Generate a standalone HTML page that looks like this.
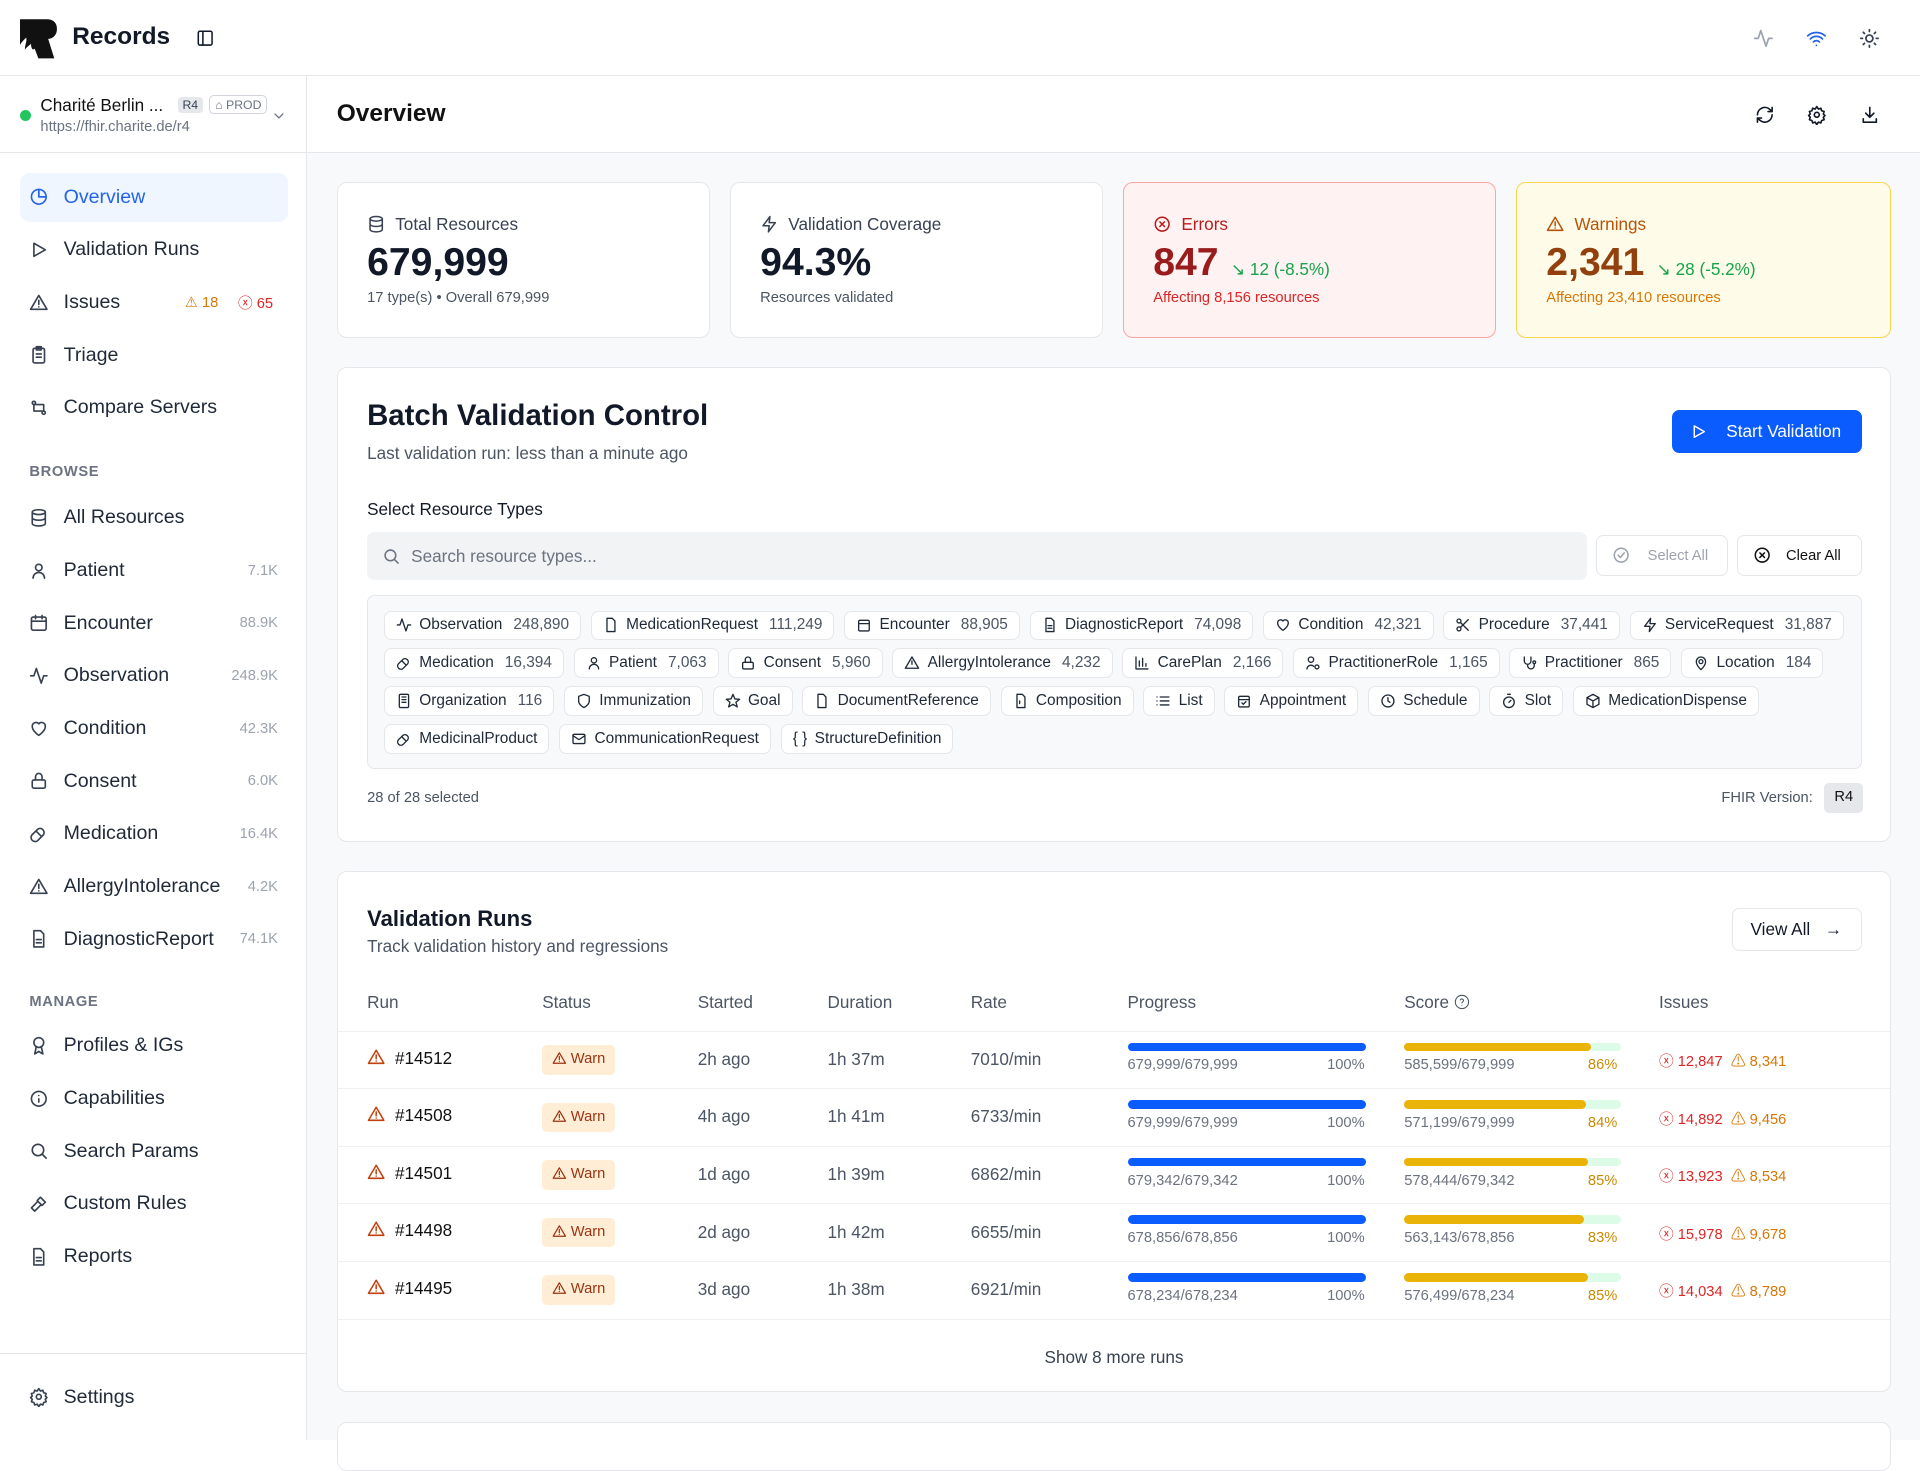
<!DOCTYPE html>
<html><head><meta charset="utf-8"><style>
html{zoom:1.2244898}
*{box-sizing:border-box;margin:0;padding:0}
body{width:1568px;height:1176px;overflow:hidden;font-family:"Liberation Sans",sans-serif;color:#111827;background:#fff;position:relative}
svg{fill:none;stroke:currentColor;stroke-width:2;stroke-linecap:round;stroke-linejoin:round}
.abs{position:absolute}
.top{position:absolute;left:0;top:0;width:1568px;height:62px;border-bottom:1px solid #e5e7eb;background:#fff}
.side{position:absolute;left:0;top:62px;width:251px;height:1114px;border-right:1px solid #e5e7eb;background:#fff}
.main{position:absolute;left:251px;top:62px;width:1317px;height:1114px;background:#f8f9fb}
.nav{position:absolute;left:16px;width:219px;height:40px;display:flex;align-items:center;font-size:16px;color:#1f2937}
.nav svg{width:16px;height:16px;margin:0 12px 0 8px;color:#374151}
.nav .c{margin-left:auto;margin-right:8px;font-size:12px;color:#9ca3af}
.sec{position:absolute;left:24px;font-size:12px;font-weight:bold;color:#6b7280;letter-spacing:.5px}
.card{position:absolute;background:#fff;border:1px solid #e5e7eb;border-radius:8px}
.stat .t{position:absolute;left:24px;top:25px;font-size:14px;color:#374151;display:flex;align-items:center}
.stat .t svg{width:15px;height:15px;margin-right:8px}
.stat .v{position:absolute;left:24px;top:47px;font-size:32px;font-weight:bold;display:flex;align-items:baseline}
.stat .s{position:absolute;left:24px;top:87px;font-size:12px;color:#4b5563}
.chips{line-height:0}
.chip{display:inline-flex;align-items:center;height:24px;line-height:normal;vertical-align:top;border:1px solid #e5e7eb;border-radius:6px;background:#fff;padding:0 9px;font-size:12.6px;color:#1f2937;margin:0 8px 7px 0;white-space:nowrap}
.chip svg{width:13px;height:13px;margin-right:6px}
.chip b{font-weight:normal;color:#4b5563;margin-left:9px}
.th{position:absolute;top:98px;font-size:14px;color:#4b5563;display:flex;align-items:center}
.row{position:absolute;left:0;width:1268px;height:47px;border-top:1px solid #eef0f3}
.row>*{position:absolute}
.bar{height:7px;border-radius:4px}
</style></head><body>
<div class="top">
 <svg class="abs" style="left:16px;top:15px;width:32px;height:33px;stroke:none;fill:#111" viewBox="0 0 32 33"><path d="M0 1h22c6 0 9 4 8 10-1 4-4 6-7 6l5 16H15l-3-8c-2 2-3-1-3-4-2 2-4 3-5 5 0-5 2-7 1-10-2 2-4 4-5 6z"/></svg>
 <div class="abs" style="left:59px;top:19px;font-size:20px;font-weight:bold">Records</div>
 <svg class="abs" style="left:160px;top:24px;width:15px;height:15px" viewBox="0 0 24 24"><rect x="3" y="3" width="18" height="18" rx="2"/><path d="M9 3v18"/></svg>
 <svg class="abs" style="left:1432px;top:23px;width:17px;height:17px;color:#9ca3af" viewBox="0 0 24 24"><path d="M22 12h-4l-3 9L9 3l-3 9H2"/></svg>
 <svg class="abs" style="left:1475px;top:23px;width:17px;height:17px;color:#2563eb" viewBox="0 0 24 24"><path d="M5 12.5a10 10 0 0 1 14 0M8.5 16a5 5 0 0 1 7 0M2 9a15 15 0 0 1 20 0M12 20h.01"/></svg>
 <svg class="abs" style="left:1518px;top:23px;width:17px;height:17px;color:#374151" viewBox="0 0 24 24"><circle cx="12" cy="12" r="4"/><path d="M12 2v2M12 20v2M4.9 4.9l1.4 1.4M17.7 17.7l1.4 1.4M2 12h2M20 12h2M6.3 17.7l-1.4 1.4M19.1 4.9l-1.4 1.4"/></svg>
</div>
<div class="side">
 <div class="abs" style="left:16px;top:28px;width:9px;height:9px;border-radius:50%;background:#22c55e"></div>
 <div class="abs" style="left:33px;top:16px;font-size:14px;color:#111">Charité Berlin ...</div>
 <div class="abs" style="left:145px;top:17px;font-size:10px;background:#e5e7eb;border-radius:3px;padding:1px 4px;color:#374151">R4</div>
 <div class="abs" style="left:171px;top:16px;font-size:10px;border:1px solid #d1d5db;border-radius:4px;padding:1px 4px;color:#6b7280">⌂ PROD</div>
 <svg class="abs" style="left:221px;top:26px;width:13px;height:13px;color:#6b7280" viewBox="0 0 24 24"><path d="M6 9l6 6 6-6"/></svg>
 <div class="abs" style="left:33px;top:35px;font-size:12px;color:#6b7280">https://fhir.charite.de/r4</div>
 <div class="abs" style="left:0;top:62px;width:250px;border-top:1px solid #e5e7eb"></div>
</div>
<div class="nav" style="top:141px;background:#eff6ff;border-radius:8px;color:#2563eb"><svg viewBox="0 0 24 24" style="color:#2563eb"><path d="M21 12a9 9 0 1 1-9-9v9z"/><path d="M12 3a9 9 0 0 1 9 9h-9z"/></svg>Overview</div>
<div class="nav" style="top:184px"><svg viewBox="0 0 24 24"><path d="M6 4l14 8-14 8z"/></svg>Validation Runs</div>
<div class="nav" style="top:227px"><svg viewBox="0 0 24 24"><path d="M12 3L2 20h20z M12 9v5 M12 17h.01"/></svg>Issues<span style="margin-left:auto;font-size:12px;color:#d97706">⚠ 18</span><span style="margin:0 12px 0 16px;font-size:12px;color:#dc2626">ⓧ 65</span></div>
<div class="nav" style="top:270px"><svg viewBox="0 0 24 24"><rect x="5" y="4" width="14" height="18" rx="2"/><path d="M9 2h6v4H9zM9 11h6M9 15h6"/></svg>Triage</div>
<div class="nav" style="top:313px"><svg viewBox="0 0 24 24"><circle cx="6" cy="6" r="2"/><circle cx="18" cy="18" r="2"/><path d="M6 8v8h10M18 16V8H8"/></svg>Compare Servers</div>
<div class="sec" style="top:379px">BROWSE</div>
<div class="nav" style="top:403px"><svg viewBox="0 0 24 24"><ellipse cx="12" cy="5" rx="8" ry="3"/><path d="M4 5v14c0 1.7 3.6 3 8 3s8-1.3 8-3V5M4 12c0 1.7 3.6 3 8 3s8-1.3 8-3"/></svg>All Resources</div>
<div class="nav" style="top:446px"><svg viewBox="0 0 24 24"><circle cx="12" cy="8" r="4"/><path d="M5 21a7 7 0 0 1 14 0"/></svg>Patient<span class="c">7.1K</span></div>
<div class="nav" style="top:489px"><svg viewBox="0 0 24 24"><rect x="3" y="5" width="18" height="16" rx="2"/><path d="M8 3v4M16 3v4M3 10h18"/></svg>Encounter<span class="c">88.9K</span></div>
<div class="nav" style="top:532px"><svg viewBox="0 0 24 24"><path d="M22 12h-4l-3 9L9 3l-3 9H2"/></svg>Observation<span class="c">248.9K</span></div>
<div class="nav" style="top:575px"><svg viewBox="0 0 24 24"><path d="M12 20s-8-5-8-11a4.5 4.5 0 0 1 8-3 4.5 4.5 0 0 1 8 3c0 6-8 11-8 11z"/></svg>Condition<span class="c">42.3K</span></div>
<div class="nav" style="top:618px"><svg viewBox="0 0 24 24"><rect x="4" y="11" width="16" height="10" rx="2"/><path d="M8 11V7a4 4 0 0 1 8 0v4"/></svg>Consent<span class="c">6.0K</span></div>
<div class="nav" style="top:661px"><svg viewBox="0 0 24 24"><path d="M10.5 20.5a5 5 0 0 1-7-7l7-7a5 5 0 0 1 7 7zM8.5 8.5l7 7"/></svg>Medication<span class="c">16.4K</span></div>
<div class="nav" style="top:704px"><svg viewBox="0 0 24 24"><path d="M12 3L2 20h20z M12 9v5 M12 17h.01"/></svg>AllergyIntolerance<span class="c">4.2K</span></div>
<div class="nav" style="top:747px"><svg viewBox="0 0 24 24"><path d="M14 2H6v20h12V6z M9 13h6M9 17h6"/></svg>DiagnosticReport<span class="c">74.1K</span></div>
<div class="sec" style="top:812px">MANAGE</div>
<div class="nav" style="top:834px"><svg viewBox="0 0 24 24"><circle cx="12" cy="8" r="6"/><path d="M9 13l-2 9 5-3 5 3-2-9"/></svg>Profiles &amp; IGs</div>
<div class="nav" style="top:877px"><svg viewBox="0 0 24 24"><circle cx="12" cy="12" r="9"/><path d="M12 16v-4M12 8h.01"/></svg>Capabilities</div>
<div class="nav" style="top:920px"><svg viewBox="0 0 24 24"><circle cx="11" cy="11" r="7"/><path d="M21 21l-5-5"/></svg>Search Params</div>
<div class="nav" style="top:963px"><svg viewBox="0 0 24 24"><path d="M14 4l6 6-4 4-6-6zM11 9l-8 8 4 4 8-8"/></svg>Custom Rules</div>
<div class="nav" style="top:1006px"><svg viewBox="0 0 24 24"><path d="M14 2H6v20h12V6z M9 13h6M9 17h6"/></svg>Reports</div>
<div class="abs" style="left:0;top:1105px;width:250px;border-top:1px solid #e5e7eb"></div>
<div class="nav" style="top:1121px"><svg viewBox="0 0 24 24"><circle cx="12" cy="12" r="3"/><path d="M12 2l2 3 3-1 1 3 3 1-1 3 2 2-2 2 1 3-3 1-1 3-3-1-2 3-2-3-3 1-1-3-3-1 1-3-2-2 2-2-1-3 3-1 1-3 3 1z"/></svg>Settings</div>

<div class="main">
 <div class="abs" style="left:0;top:0;width:1317px;height:63px;background:#fff;border-bottom:1px solid #e5e7eb"></div>
 <div class="abs" style="left:24px;top:20px;font-size:20px;font-weight:bold;color:#111">Overview</div>
 <svg class="abs" style="left:1182px;top:24px;width:16px;height:16px" viewBox="0 0 24 24"><path d="M3 12a9 9 0 0 1 15-6.7L21 8M21 3v5h-5M21 12a9 9 0 0 1-15 6.7L3 16M3 21v-5h5"/></svg>
 <svg class="abs" style="left:1225px;top:24px;width:16px;height:16px" viewBox="0 0 24 24"><circle cx="12" cy="12" r="3"/><path d="M12 2l2 3 3-1 1 3 3 1-1 3 2 2-2 2 1 3-3 1-1 3-3-1-2 3-2-3-3 1-1-3-3-1 1-3-2-2 2-2-1-3 3-1 1-3 3 1z"/></svg>
 <svg class="abs" style="left:1268px;top:24px;width:16px;height:16px" viewBox="0 0 24 24"><path d="M12 3v12M7 10l5 5 5-5M4 17v4h16v-4"/></svg>

 <div class="card stat" style="left:24px;top:87px;width:305px;height:127px"><div class="t"><svg viewBox="0 0 24 24"><ellipse cx="12" cy="5" rx="8" ry="3"/><path d="M4 5v14c0 1.7 3.6 3 8 3s8-1.3 8-3V5M4 12c0 1.7 3.6 3 8 3s8-1.3 8-3"/></svg>Total Resources</div><div class="v">679,999</div><div class="s">17 type(s) • Overall 679,999</div></div>
 <div class="card stat" style="left:345px;top:87px;width:305px;height:127px"><div class="t"><svg viewBox="0 0 24 24"><path d="M13 2L4 14h8l-1 8 9-12h-8z"/></svg>Validation Coverage</div><div class="v">94.3%</div><div class="s">Resources validated</div></div>
 <div class="card stat" style="left:666px;top:87px;width:305px;height:127px;background:#fef2f2;border-color:#fca5a5"><div class="t" style="color:#b91c1c"><svg viewBox="0 0 24 24"><circle cx="12" cy="12" r="9"/><path d="M15 9l-6 6M9 9l6 6"/></svg>Errors</div><div class="v" style="color:#991b1b">847<span style="font-size:14px;font-weight:normal;color:#16a34a;margin-left:10px">↘ 12 (-8.5%)</span></div><div class="s" style="color:#dc2626">Affecting 8,156 resources</div></div>
 <div class="card stat" style="left:987px;top:87px;width:306px;height:127px;background:#fefce8;border-color:#fcd34d"><div class="t" style="color:#b45309"><svg viewBox="0 0 24 24"><path d="M12 3L2 20h20z M12 9v5 M12 17h.01"/></svg>Warnings</div><div class="v" style="color:#92400e">2,341<span style="font-size:14px;font-weight:normal;color:#16a34a;margin-left:10px">↘ 28 (-5.2%)</span></div><div class="s" style="color:#d97706">Affecting 23,410 resources</div></div>

 <div class="card" style="left:24px;top:238px;width:1269px;height:388px">
  <div class="abs" style="left:24px;top:25px;font-size:24px;font-weight:bold">Batch Validation Control</div>
  <div class="abs" style="left:24px;top:61px;font-size:14px;color:#4b5563">Last validation run: less than a minute ago</div>
  <div class="abs" style="left:1090px;top:34px;width:155px;height:35px;background:#0b5cff;border-radius:6px;color:#fff;font-size:14px;display:flex;align-items:center;padding-left:14px"><svg viewBox="0 0 24 24" style="width:14px;height:14px;margin-right:16px"><path d="M6 4l14 8-14 8z"/></svg>Start Validation</div>
  <div class="abs" style="left:24px;top:107px;font-size:14px">Select Resource Types</div>
  <div class="abs" style="left:24px;top:134px;width:996px;height:39px;background:#f1f3f5;border-radius:6px;font-size:14px;color:#6b7280;display:flex;align-items:center;padding-left:12px"><svg viewBox="0 0 24 24" style="width:15px;height:15px;margin-right:9px"><circle cx="11" cy="11" r="7"/><path d="M21 21l-5-5"/></svg>Search resource types...</div>
  <div class="abs" style="left:1028px;top:136px;width:107px;height:34px;border:1px solid #e5e7eb;border-radius:6px;font-size:12px;color:#9ca3af;display:flex;align-items:center;padding-left:12px"><svg viewBox="0 0 24 24" style="width:15px;height:15px;margin-right:14px"><circle cx="12" cy="12" r="9"/><path d="M8 12l3 3 5-6"/></svg>Select All</div>
  <div class="abs" style="left:1143px;top:136px;width:102px;height:34px;border:1px solid #e5e7eb;border-radius:6px;font-size:12px;color:#111;display:flex;align-items:center;padding-left:12px"><svg viewBox="0 0 24 24" style="width:15px;height:15px;margin-right:12px"><circle cx="12" cy="12" r="9"/><path d="M15 9l-6 6M9 9l6 6"/></svg>Clear All</div>
  <div class="abs chips" style="left:24px;top:185px;width:1221px;height:142px;background:#f8f9fb;border:1px solid #e5e7eb;border-radius:6px;padding:12px 0 0 13px">
   <span class="chip"><svg viewBox="0 0 24 24"><path d="M22 12h-4l-3 9L9 3l-3 9H2"/></svg>Observation<b>248,890</b></span><span class="chip"><svg viewBox="0 0 24 24"><path d="M14 2H6v20h12V6z"/></svg>MedicationRequest<b>111,249</b></span><span class="chip"><svg viewBox="0 0 24 24"><rect x="4" y="5" width="16" height="16" rx="2"/><path d="M4 10h16"/></svg>Encounter<b>88,905</b></span><span class="chip"><svg viewBox="0 0 24 24"><path d="M14 2H6v20h12V6z M9 13h6M9 17h6"/></svg>DiagnosticReport<b>74,098</b></span><span class="chip"><svg viewBox="0 0 24 24"><path d="M12 20s-8-5-8-11a4.5 4.5 0 0 1 8-3 4.5 4.5 0 0 1 8 3c0 6-8 11-8 11z"/></svg>Condition<b>42,321</b></span><span class="chip"><svg viewBox="0 0 24 24"><circle cx="6" cy="6" r="3"/><circle cx="6" cy="18" r="3"/><path d="M20 4L8.5 15.5M20 20L8.5 8.5"/></svg>Procedure<b>37,441</b></span><span class="chip"><svg viewBox="0 0 24 24"><path d="M13 2L4 14h8l-1 8 9-12h-8z"/></svg>ServiceRequest<b>31,887</b></span><br>
   <span class="chip"><svg viewBox="0 0 24 24"><path d="M10.5 20.5a5 5 0 0 1-7-7l7-7a5 5 0 0 1 7 7zM8.5 8.5l7 7"/></svg>Medication<b>16,394</b></span><span class="chip"><svg viewBox="0 0 24 24"><circle cx="12" cy="8" r="4"/><path d="M5 21a7 7 0 0 1 14 0"/></svg>Patient<b>7,063</b></span><span class="chip"><svg viewBox="0 0 24 24"><rect x="4" y="11" width="16" height="10" rx="2"/><path d="M8 11V7a4 4 0 0 1 8 0v4"/></svg>Consent<b>5,960</b></span><span class="chip"><svg viewBox="0 0 24 24"><path d="M12 3L2 20h20z M12 9v5"/></svg>AllergyIntolerance<b>4,232</b></span><span class="chip"><svg viewBox="0 0 24 24"><path d="M3 3v18h18M8 17V9M13 17V5M18 17v-4"/></svg>CarePlan<b>2,166</b></span><span class="chip"><svg viewBox="0 0 24 24"><circle cx="9" cy="7" r="4"/><path d="M3 21a6 6 0 0 1 10-4"/><circle cx="18" cy="18" r="3"/></svg>PractitionerRole<b>1,165</b></span><span class="chip"><svg viewBox="0 0 24 24"><path d="M5 3v6a5 5 0 0 0 10 0V3M10 14v2a5 5 0 0 0 10 0v-3"/><circle cx="20" cy="11" r="2"/></svg>Practitioner<b>865</b></span><span class="chip"><svg viewBox="0 0 24 24"><path d="M12 22s7-6 7-12a7 7 0 0 0-14 0c0 6 7 12 7 12z"/><circle cx="12" cy="10" r="3"/></svg>Location<b>184</b></span><br>
   <span class="chip"><svg viewBox="0 0 24 24"><rect x="5" y="2" width="14" height="20" rx="2"/><path d="M9 6h6M9 10h6M9 14h6"/></svg>Organization<b>116</b></span><span class="chip"><svg viewBox="0 0 24 24"><path d="M12 22s8-4 8-10V5l-8-3-8 3v7c0 6 8 10 8 10z"/></svg>Immunization</span><span class="chip"><svg viewBox="0 0 24 24"><path d="M12 2l3 7 7 .5-5.5 4.5 2 7-6.5-4-6.5 4 2-7L2 9.5 9 9z"/></svg>Goal</span><span class="chip"><svg viewBox="0 0 24 24"><path d="M14 2H6v20h12V6z"/></svg>DocumentReference</span><span class="chip"><svg viewBox="0 0 24 24"><path d="M14 2H6v20h12V6z M10 12v4"/></svg>Composition</span><span class="chip"><svg viewBox="0 0 24 24"><path d="M8 6h13M8 12h13M8 18h13M3 6h.01M3 12h.01M3 18h.01"/></svg>List</span><span class="chip"><svg viewBox="0 0 24 24"><rect x="4" y="5" width="16" height="16" rx="2"/><path d="M4 10h16M9 15l2 2 4-4"/></svg>Appointment</span><span class="chip"><svg viewBox="0 0 24 24"><circle cx="12" cy="12" r="9"/><path d="M12 7v5l3 2"/></svg>Schedule</span><span class="chip"><svg viewBox="0 0 24 24"><circle cx="12" cy="14" r="8"/><path d="M10 2h4M12 14l3-3"/></svg>Slot</span><span class="chip"><svg viewBox="0 0 24 24"><path d="M12 2l9 5v10l-9 5-9-5V7zM3 7l9 5 9-5M12 12v10"/></svg>MedicationDispense</span><br>
   <span class="chip"><svg viewBox="0 0 24 24"><path d="M10.5 20.5a5 5 0 0 1-7-7l7-7a5 5 0 0 1 7 7zM8.5 8.5l7 7"/></svg>MedicinalProduct</span><span class="chip"><svg viewBox="0 0 24 24"><rect x="3" y="5" width="18" height="14" rx="2"/><path d="M3 7l9 6 9-6"/></svg>CommunicationRequest</span><span class="chip"><span style="margin-right:6px">{ }</span>StructureDefinition</span>
  </div>
  <div class="abs" style="left:24px;top:344px;font-size:12px;color:#4b5563">28 of 28 selected</div>
  <div class="abs" style="left:1130px;top:344px;font-size:12px;color:#4b5563">FHIR Version:</div>
  <div class="abs" style="left:1214px;top:339px;width:32px;height:24px;background:#e5e7eb;border-radius:4px;font-size:12px;text-align:center;line-height:24px;color:#111">R4</div>
 </div>

 <div class="card" style="left:24px;top:649px;width:1269px;height:426px">
  <div class="abs" style="left:24px;top:28px;font-size:18px;font-weight:bold">Validation Runs</div>
  <div class="abs" style="left:24px;top:53px;font-size:14px;color:#4b5563">Track validation history and regressions</div>
  <div class="abs" style="left:1139px;top:30px;width:106px;height:35px;border:1px solid #e5e7eb;border-radius:6px;font-size:14px;display:flex;align-items:center;padding-left:14px">View All<span style="margin-left:12px">→</span></div>
  <div class="th" style="left:24px">Run</div><div class="th" style="left:167px">Status</div><div class="th" style="left:294px">Started</div><div class="th" style="left:400px">Duration</div><div class="th" style="left:517px">Rate</div><div class="th" style="left:645px">Progress</div><div class="th" style="left:871px">Score<svg viewBox="0 0 24 24" style="width:13px;height:13px;margin-left:4px;stroke-width:1.6"><circle cx="12" cy="12" r="10"/><path d="M9.5 9a2.5 2.5 0 0 1 4.8 1c0 1.7-2.3 2-2.3 3.5M12 17h.01"/></svg></div><div class="th" style="left:1079px">Issues</div>
  <div id="rows"></div>
  <div class="abs" style="left:0;top:365px;width:1268px;border-top:1px solid #eef0f3"></div>
  <div class="abs" style="left:0;top:388px;width:1268px;text-align:center;font-size:14px;color:#374151">Show 8 more runs</div>
 </div>
 <div class="card" style="left:24px;top:1099px;width:1269px;height:40px"></div>
</div>
<script>
var d=[["14512","2h ago","1h 37m","7010/min","679,999/679,999","585,599/679,999",86,"12,847","8,341"],["14508","4h ago","1h 41m","6733/min","679,999/679,999","571,199/679,999",84,"14,892","9,456"],["14501","1d ago","1h 39m","6862/min","679,342/679,342","578,444/679,342",85,"13,923","8,534"],["14498","2d ago","1h 42m","6655/min","678,856/678,856","563,143/678,856",83,"15,978","9,678"],["14495","3d ago","1h 38m","6921/min","678,234/678,234","576,499/678,234",85,"14,034","8,789"]];
var h="",tri='<svg viewBox="0 0 24 24" style="width:15px;height:15px;vertical-align:-2px"><path d="M12 3L2 20h20z M12 9v5 M12 17h.01"/></svg>';
d.forEach(function(r,i){var t=130+i*47;h+='<div class="row" style="top:'+t+'px">'+
'<div style="left:24px;top:13px;font-size:14px;color:#111"><span style="color:#c2410c">'+tri+'</span>&nbsp; #'+r[0]+'</div>'+
'<div style="left:167px;top:11px;height:24px;padding:0 8px;background:#ffedd5;border-radius:4px;font-size:12px;color:#9a3412;line-height:24px">'+tri.replace('15px;height:15px','12px;height:12px')+' Warn</div>'+
'<div style="left:294px;top:14px;font-size:14px;color:#4b5563">'+r[1]+'</div><div style="left:400px;top:14px;font-size:14px;color:#4b5563">'+r[2]+'</div><div style="left:517px;top:14px;font-size:14px;color:#4b5563">'+r[3]+'</div>'+
'<div class="bar" style="left:645px;top:9px;width:195px;background:#0b5cff"></div><div style="left:645px;top:21px;font-size:12px;color:#6b7280">'+r[4]+'</div><div style="left:808px;top:21px;font-size:12px;color:#6b7280">100%</div>'+
'<div class="bar" style="left:871px;top:9px;width:177px;background:#dcfce7"><div class="bar" style="width:'+r[6]+'%;background:#eab308"></div></div><div style="left:871px;top:21px;font-size:12px;color:#6b7280">'+r[5]+'</div><div style="left:1021px;top:21px;font-size:12px;color:#ca8a04">'+r[6]+'%</div>'+
'<div style="left:1079px;top:15px;font-size:12px"><span style="color:#dc2626">ⓧ '+r[7]+'</span>&nbsp; <span style="color:#d97706">⚠ '+r[8]+'</span></div></div>';});
document.getElementById("rows").innerHTML=h;
</script>
</body></html>
